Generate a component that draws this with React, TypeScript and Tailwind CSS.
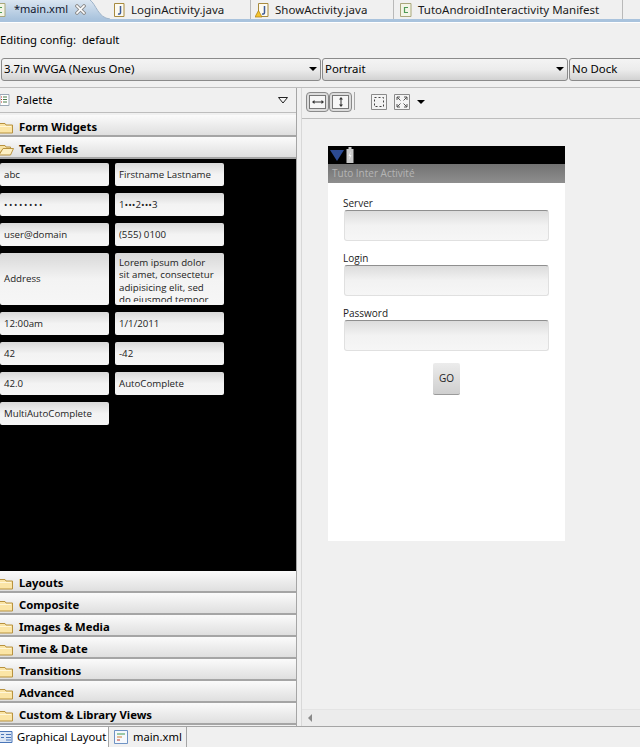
const FONT = "font-['Open_Sans','Noto_Sans',sans-serif]";
const UI_FONT = "font-['Noto_Sans','Open_Sans',sans-serif]";

// closed + open folder glyphs from the palette headers
function Folder({ open = false }: { open?: boolean }) {
  return (
    <svg width="14" height="12" viewBox="0 0 14 12" className="shrink-0">
      {open ? (
        <>
          <path d="M-1 1.500h6l1 1.500h4.500v2H3L-1 10.500z" fill="#f8e3a5" stroke="#b8923f" />
          <path d="M3 4.500h10.500l-3 6.500H-1z" fill="#fdf0c4" stroke="#b8923f" />
        </>
      ) : (
        <>
          <path d="M-1 1.500h6l1 1.500h6.500v8H-1z" fill="#fbe5a6" stroke="#b8923f" />
          <path d="M-1 4.500h12" stroke="#fff6d8" />
        </>
      )}
    </svg>
  );
}

function Category({ label, open = false }: { label: string; open?: boolean }) {
  return (
    <div className="h-[22px] pt-[5px] flex items-center gap-[5px] border-b-2 border-[#a5a5a5] bg-gradient-to-b from-[#fbfbfb] to-[#dfdfdf] shrink-0">
      <Folder open={open} />
      <span className={`text-[11.300px] font-bold text-black whitespace-nowrap ${UI_FONT}`}>{label}</span>
    </div>
  );
}

function Field({ label, h = 'h-[23px]', children }: { label?: string; h?: string; children?: React.ReactNode }) {
  return (
    <div className={`${h} pt-[1px] rounded-[2px] bg-gradient-to-b from-[#d8d8d8] via-[#f3f3f3] to-[#f6f6f6] overflow-hidden text-[#222] text-[9.700px] px-[4px] flex items-center ${FONT}`}>
      {label}
      {children}
    </div>
  );
}

function JavaIcon({ warn = false }: { warn?: boolean }) {
  return (
    <svg width="16" height="16" viewBox="0 0 16 16" className="shrink-0">
      <path d="M3.500 1.500h9.500v13H3.500z" fill="#fdfaf0" stroke="#a78a3e" />
      <path d="M9.500 4v6.500q0 2-2.500 1.500" fill="none" stroke="#3b5a98" strokeWidth="1.500" />
      {warn && <path d="M3.500 8.500l3.500 6.500H0z" fill="#f4c430" stroke="#a97c10" strokeWidth=".7" />}
    </svg>
  );
}

function XmlIcon() {
  return (
    <svg width="16" height="16" viewBox="0 0 16 16" className="shrink-0">
      <path d="M2.500 1.500h10.500v13H2.500z" fill="#f3f5e6" stroke="#a9a77b" />
      <path d="M10 5.500H6.500v5H10" fill="none" stroke="#4d9a55" strokeWidth="1.200" />
    </svg>
  );
}

function Tab({ icon, label, className }: { icon: React.ReactNode; label: string; className: string }) {
  return (
    <div className={`${className} h-[19px] flex items-center gap-[4px] shrink-0 border-r border-[#b9b9b9]`}>
      {icon}
      <span className={`text-[11.500px] text-[#1a1a1a] whitespace-nowrap ${UI_FONT}`}>{label}</span>
    </div>
  );
}

function ActiveTab() {
  return (
    <div className="w-[110px] h-[19px] flex shrink-0">
      <div className="w-[90px] bg-gradient-to-b from-[#dbe6f1] to-[#a9c3dd] flex items-center">
        <div className="w-[8px] overflow-hidden flex justify-end shrink-0">
          <div className="shrink-0"><XmlIcon /></div>
        </div>
        <span className={`ml-[6px] text-[11px] text-[#10162c] whitespace-nowrap ${UI_FONT}`}>*main.xml</span>
        <svg width="11" height="11" viewBox="0 0 11 11" className="ml-[7px] shrink-0">
          <path d="M2 2l7 7M9 2l-7 7" stroke="#8c8c8c" strokeWidth="3.400" strokeLinecap="square" />
          <path d="M2 2l7 7M9 2l-7 7" stroke="#fff" strokeWidth="1.600" strokeLinecap="square" />
        </svg>
      </div>
      <svg width="20" height="19" viewBox="0 0 20 19" className="shrink-0">
        <defs>
          <linearGradient id="tabfill" x1="0" y1="0" x2="0" y2="1">
            <stop offset="0" stopColor="#dbe6f1" />
            <stop offset="1" stopColor="#a9c3dd" />
          </linearGradient>
        </defs>
        <path d="M0 0C6 4 8 18 20 19H0z" fill="url(#tabfill)" />
        <path d="M0 0C6 4 8 18 20 19" fill="none" stroke="#9db3c9" />
      </svg>
    </div>
  );
}

function Combo({ label, width }: { label: string; width: string }) {
  return (
    <div className={`${width} h-[23px] rounded-[3px] border border-[#8a8a8a] bg-gradient-to-b from-[#f4f4f4] via-[#ececec] to-[#d2d2d2] flex items-center justify-between px-[2px] shrink-0`}>
      <span className={`text-[11.400px] text-black whitespace-nowrap ${UI_FONT}`}>{label}</span>
      <span className="w-0 h-0 mr-[1px] border-l-[4px] border-r-[4px] border-t-[4px] border-l-transparent border-r-transparent border-t-black" />
    </div>
  );
}

function PhoneInput({ label }: { label: string }) {
  return (
    <div className={`flex flex-col ${FONT}`}>
      <span className="pl-[15px] h-[14px] text-[10px] leading-[14px] text-[#222]">{label}</span>
      <div className="ml-[16px] w-[205px] h-[31px] rounded-[3px] border border-[#e0e0e0] border-t-[#8f8f8f] bg-gradient-to-b from-[#dcdcdc] via-[#f2f2f2] to-[#f6f6f6]" />
    </div>
  );
}

function ToggleBtn({ vertical = false }: { vertical?: boolean }) {
  return (
    <div className="w-[23px] h-[20px] rounded-[4px] border border-[#8a8a8a] bg-[#dcdcdc] flex items-center justify-center">
      <div className="w-[17px] h-[14px] border border-[#777] bg-[#f6f6f6] flex items-center justify-center">
        <svg width="12" height="10" viewBox="0 0 12 10">
          {vertical ? (
            <path d="M6 0l2 2.500H6.500v5H8L6 10 4 7.500h1.500v-5H4z" fill="#333" />
          ) : (
            <path d="M0 5l2.500-2v1.500h7V3L12 5 9.500 7V5.500h-7V7z" fill="#333" />
          )}
        </svg>
      </div>
    </div>
  );
}

export default function App() {
  return (
    <div className={`w-[640px] h-[747px] overflow-hidden flex flex-col bg-[#f0f0f0] ${UI_FONT}`}>
      {/* editor tabs */}
      <div className="h-[19px] flex items-center bg-[#f0f0f0]">
        <ActiveTab />
        <Tab className="w-[141px] pl-[1px]" icon={<JavaIcon />} label="LoginActivity.java" />
        <Tab className="w-[143px] pl-[4px]" icon={<JavaIcon warn />} label="ShowActivity.java" />
        <Tab className="w-[229px] pl-[4px]" icon={<XmlIcon />} label="TutoAndroidInteractivity Manifest" />
      </div>
      <div className="h-[3px] bg-[#a9c3dd]" />
      <div className="h-px bg-white" />

      <div className="h-[34px] flex items-center text-[11.300px] text-black whitespace-pre">Editing config:  default</div>

      <div className="flex gap-[1px] h-[24px] items-center pl-[1px] w-[660px]">
        <Combo label="3.7in WVGA (Nexus One)" width="w-[320px]" />
        <Combo label="Portrait" width="w-[246px]" />
        <Combo label="No Dock" width="w-[90px]" />
      </div>

      <div className="flex-1 flex mt-[6px] border-t border-[#bdbdbd] min-h-0">
        {/* palette */}
        <div className="w-[297px] flex flex-col border-r border-[#a5a5a5] pb-[1px] shrink-0">
          <div className="h-[25px] mb-[2px] flex items-center justify-between pr-[8px] border-b border-[#bdbdbd] shrink-0">
            <div className="flex items-center gap-[6px]">
              <svg width="10" height="14" viewBox="0 0 10 14">
                <path d="M0 1.500h9v11H0z" fill="#fff" stroke="#9aa7b5" />
                <path d="M3 4h4M3 6.500h4M3 9h4" stroke="#4a7a4a" />
                <path d="M1 4h1M1 6.500h1M1 9h1" stroke="#c0392b" />
              </svg>
              <span className="text-[11.200px] text-black">Palette</span>
            </div>
            <svg width="10" height="7" viewBox="0 0 10 7">
              <path d="M.500.500h9L5 6z" fill="#f4f4f4" stroke="#222" />
            </svg>
          </div>
          <Category label="Form Widgets" />
          <Category open label="Text Fields" />
          {/* text field previews */}
          <div className="flex-1 bg-black pt-[4px] min-h-0 overflow-hidden">
            <div className="grid grid-cols-[109px_109px] gap-x-[6px] gap-y-[7px] w-[224px]">
              <Field label="abc" />
              <Field label="Firstname Lastname" />
              <Field>
                <span className="text-[9px] tracking-[1.600px]">••••••••</span>
              </Field>
              <Field label="1•••2•••3" />
              <Field label="user@domain" />
              <Field label="(555) 0100" />
              <Field label="Address" h="h-[52px]" />
              <Field h="h-[52px]">
                <span className="block w-[97px] leading-[12.400px] self-start mt-[3px] h-[45px] overflow-hidden">Lorem ipsum dolor sit amet, consectetur adipisicing elit, sed do eiusmod tempor</span>
              </Field>
              <Field label="12:00am" />
              <Field label="1/1/2011" />
              <Field label="42" />
              <Field label="-42" />
              <Field label="42.0" />
              <Field label="AutoComplete" />
              <Field label="MultiAutoComplete" />
            </div>
          </div>
          <Category label="Layouts" />
          <Category label="Composite" />
          <Category label="Images & Media" />
          <Category label="Time & Date" />
          <Category label="Transitions" />
          <Category label="Advanced" />
          <Category label="Custom & Library Views" />
        </div>

        {/* layout canvas */}
        <div className="flex-1 flex flex-col ml-[4px] border-l border-[#d8d8d8] min-w-0">
          <div className="h-[31px] flex items-start pt-[4px] pl-[4px] border-b border-[#bdbdbd] shrink-0">
            <ToggleBtn />
            <ToggleBtn vertical />
            <div className="w-px h-[18px] bg-[#a8a8a8] ml-[2px]" />
            <svg width="16" height="16" viewBox="0 0 16 16" className="ml-[16px] mt-[2px]">
              <path d="M.500.500h15v15H.500z" fill="#f4f4f4" stroke="#8a8a8a" />
              <path d="M3.500 3.500h9v9h-9z" fill="none" stroke="#444" strokeDasharray="2 2" />
            </svg>
            <svg width="16" height="16" viewBox="0 0 16 16" className="ml-[7px] mt-[2px]">
              <path d="M.500.500h15v15H.500z" fill="#f4f4f4" stroke="#8a8a8a" />
              <path d="M3 3l3.500 3.500M13 3L9.500 6.500M3 13l3.500-3.500M13 13L9.500 9.500M3 3h3M3 3v3M13 3h-3M13 3v3M3 13h3M3 13v-3M13 13h-3M13 13v-3" fill="none" stroke="#555" />
            </svg>
            <span className="ml-[7px] mt-[8px] w-0 h-0 border-l-[4px] border-r-[4px] border-t-[4px] border-l-transparent border-r-transparent border-t-black" />
          </div>

          <div className="flex-1 pl-[26px] pt-[27px] min-h-0">
            {/* phone preview */}
            <div className="w-[237px] h-[395px] bg-white flex flex-col">
              <div className="h-[18px] bg-black flex items-center pl-[2px] gap-[2px]">
                <svg width="14" height="12" viewBox="0 0 14 12">
                  <path d="M0 1h14L7 12z" fill="#2c4a92" />
                </svg>
                <svg width="8" height="16" viewBox="0 0 8 16">
                  <path d="M2.500 0h3v2h2v14H.500V2h2z" fill="#c9c9c9" />
                  <path d="M5 4L2.500 9H4l-1 4 2.500-5H4z" fill="#f4f4f4" />
                </svg>
              </div>
              <div className={`h-[19px] bg-gradient-to-b from-[#727272] to-[#8e8e8e] text-[10px] leading-[19px] text-[#b5b5b5] pl-[4px] ${FONT}`}>Tuto Inter Activité</div>
              <div className="pt-[13px] flex flex-col gap-[10px]">
                <PhoneInput label="Server" />
                <PhoneInput label="Login" />
                <PhoneInput label="Password" />
              </div>
              <div className={`mt-[12px] mx-auto w-[27px] h-[32px] rounded-[2px] bg-gradient-to-b from-[#ececec] to-[#cfcfcf] border-b border-[#9a9a9a] flex items-center justify-center text-[10px] text-[#222] ${FONT}`}>GO</div>
            </div>
          </div>

          {/* horizontal scrollbar */}
          <div className="h-[17px] bg-[#ececec] border-t border-[#e4e4e4] flex items-center pl-[6px] shrink-0">
            <span className="w-0 h-0 border-t-[4px] border-b-[4px] border-r-[4px] border-t-transparent border-b-transparent border-r-[#8a8a8a]" />
          </div>
        </div>
      </div>

      {/* bottom tabs */}
      <div className="h-[21px] flex border-t border-[#a5a5a5] shrink-0">
        <div className="w-[109px] bg-white flex items-center gap-[4px] border-r border-[#a5a5a5]">
          <svg width="13" height="12" viewBox="0 0 13 12" className="shrink-0">
            <path d="M-1 .500h13v11H-1z" fill="#dbe6f5" stroke="#4a76b8" />
            <path d="M1 3.500h3M6 3.500h5M1 6.500h3M6 6.500h5M6 9h5" stroke="#4a76b8" />
          </svg>
          <span className="text-[11.300px] text-black whitespace-nowrap">Graphical Layout</span>
        </div>
        <div className="w-[78px] flex items-center gap-[5px] pl-[5px] border-r border-[#a5a5a5]">
          <svg width="14" height="14" viewBox="0 0 14 14" className="shrink-0">
            <path d="M.500.500h13v13H.500z" fill="#f5f8fc" stroke="#6f93c4" />
            <path d="M3 4h8" stroke="#3f9a50" /><path d="M3 7h5" stroke="#d08030" /><path d="M3 10h3" stroke="#c0392b" />
          </svg>
          <span className="text-[11.200px] text-black whitespace-nowrap">main.xml</span>
        </div>
      </div>
    </div>
  );
}
